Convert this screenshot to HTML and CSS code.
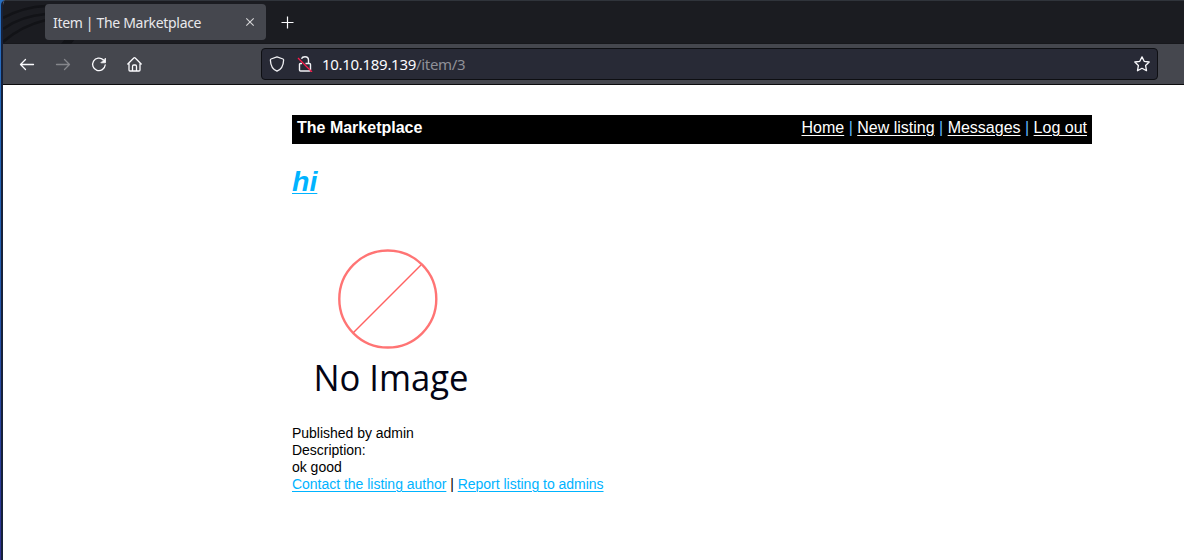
FILE: index.html
```html
<!DOCTYPE html>
<html lang="en">
<head>
<meta charset="utf-8">
<title>Item | The Marketplace</title>
<link rel="stylesheet" href="styles.css">
</head>
<body>
<div class="window">
  <div class="tabbar">
    <svg class="theme-art" width="90" height="44" viewBox="0 0 90 44" fill="none" stroke="#121317" stroke-width="2.5">
      <path d="M0 17Q20 6 43 5M0 28Q18 15 43 13M0 41Q18 25 43 19"/><path d="M58 43L62 38H72L68 43Z" fill="#121317" stroke="none"/>
    </svg>
    <div class="tab">
      <span class="tab-title">Item | The Marketplace</span>
      <svg class="tab-close" width="10" height="10" viewBox="0 0 10 10" fill="none" stroke="#d5d5d7" stroke-width="1.1"><path d="M1.300 1.300l7.400 7.400M8.700 1.300L1.300 8.700"/></svg>
    </div>
    <svg class="tab-new" width="13" height="13" viewBox="0 0 13 13" fill="none" stroke="#fbfbfe" stroke-width="1.2"><path d="M6.500 .5v12M.5 6.500h12"/></svg>
  </div>
  <div class="toolbar">
    <div class="nav-buttons">
      <svg width="16" height="16" viewBox="0 0 16 16" fill="none" stroke="#fbfbfe" stroke-width="1.3" stroke-linecap="round" stroke-linejoin="round"><path d="M14.500 8.500H1.500M6.500 3.500L1.500 8.500L6.500 13.500"/></svg>
      <svg width="16" height="16" viewBox="0 0 16 16" fill="none" stroke="#85868b" stroke-width="1.3" stroke-linecap="round" stroke-linejoin="round"><path d="M1.500 8.500h13M9.500 3.500L14.500 8.500L9.500 13.500"/></svg>
      <svg width="16" height="16" viewBox="0 0 16 16" fill="none" stroke="#fbfbfe" stroke-width="1.3" stroke-linecap="round"><path d="M12.300 3.800A6.300 6.300 0 1 0 14.200 9"/><path d="M14.500 2.500v4.300H10.200Z" fill="#fbfbfe" stroke-width=".8" stroke-linejoin="round"/></svg>
      <svg width="16" height="16" viewBox="0 0 16 16" fill="none" stroke="#fbfbfe" stroke-width="1.3" stroke-linecap="round" stroke-linejoin="round"><path d="M.8 8L6.800 2Q7.500 1.300 8.200 2L14.200 8M2 7.500V14Q2 15 3 15H12Q13 15 13 14V7.500M5.500 15V10.500Q5.500 9 6.700 9H8.300Q9.500 9 9.500 10.500V15"/></svg>
    </div>
    <div class="urlbar">
      <svg width="16" height="16" viewBox="0 0 16 16" fill="none" stroke="#f0f0f4" stroke-width="1.3" stroke-linejoin="round"><path d="M8 .9L14 3Q14.700 3.300 14.600 4.200C14.400 10 12 13.500 8 15.200C4 13.500 1.600 10 1.400 4.200Q1.300 3.300 2 3Z"/></svg>
      <svg class="lock" width="16" height="16" viewBox="0 0 16 16" fill="none" stroke="#f0f0f4" stroke-width="1.4"><path d="M4.500 2.800C5 1.400 6.300.8 8 .8C10.200.8 11.500 2.200 11.500 4.200V7.500M5 7.500H3.500Q2.500 7.500 2.500 8.500V14Q2.500 15 3.500 15H12.500Q13.500 15 13.500 14V8.500Q13.500 7.500 12.500 7.500H8.500"/><path d="M1 2L15 16" stroke="#ff1a4b" stroke-width="1.300"/></svg>
      <span class="url">10.10.189.139<span class="url-path">/item/3</span></span>
      <svg class="star" width="16" height="16" viewBox="0 0 16 16" fill="none" stroke="#fbfbfe" stroke-width="1.300" stroke-linejoin="round"><path d="M8 .9L10.200 5.300L15.200 6L11.600 9.500L12.500 14.700L8 12.300L3.500 14.700L4.400 9.500L.8 6L5.800 5.300Z"/></svg>
    </div>
  </div>
  <main class="page">
    <header class="site-header">
      <b>The Marketplace</b>
      <nav><a>Home</a> | <a>New listing</a> | <a>Messages</a> | <a>Log out</a></nav>
    </header>
    <h1 class="item-title"><a>hi</a></h1>
    <svg class="no-image" width="200" height="200" viewBox="0 0 200 200">
      <circle cx="95.800" cy="74" r="48.500" fill="none" stroke="#ff7474" stroke-width="2.400"/>
      <path d="M61.500 107.500L129 40" stroke="#ff6262" stroke-width="1.400"/>
      <text x="21.500" y="165.500" textLength="155" lengthAdjust="spacingAndGlyphs">No Image</text>
    </svg>
    <div class="details">
      <div>Published by admin</div>
      <div>Description:</div>
      <div>ok good</div>
      <div><a>Contact the listing author</a> | <a>Report listing to admins</a></div>
    </div>
  </main>
</div>
</body>
</html>
```
FILE: styles.css
```css
* { box-sizing: border-box; }
body { margin: 0; background: linear-gradient(#286fc0, #245fb2 45%, #2d2f91); }
.window { height: 560px; margin-left: 1px; border-left: 2px solid #16213a; border-radius: 5px 0 0 0; overflow: hidden; background: #fff; }
.tabbar { position: relative; display: flex; align-items: center; height: 44px; padding-left: 42px; background: #1b1c21; border-top: 1px solid #30343b; border-bottom: 1px solid #17181c; }
.theme-art { position: absolute; left: 0; top: 0; }
.tab { position: relative; display: flex; align-items: center; justify-content: space-between; width: 221px; height: 36px; padding: 0 11px 0 8px; border-radius: 4px; background: #45474e; }
.tab-title { padding-top: 2px; font: 14px/20px "Noto Sans", sans-serif; letter-spacing: -0.32px; color: #e9e9ec; }
.tab-new { margin-left: 15px; }
.toolbar { display: flex; align-items: center; height: 41px; padding: 0 26px 0 16px; background: #45474e; border-bottom: 1px solid #0c0c0d; }
.nav-buttons { display: flex; gap: 20px; width: 242px; }
.urlbar { display: flex; align-items: center; flex: 1; height: 32px; padding: 0 7px; border: 1px solid #0e0f13; border-radius: 4px; background: #282a36; }
.lock { margin-left: 12px; }
.url { margin-left: 9px; font: 15px/20px "Noto Sans", sans-serif; letter-spacing: -0.3px; color: #fbfbfe; }
.url-path { color: #8f9098; }
.star { margin-left: auto; }
.page { width: 800px; margin: 30px 0 0 289px; font: 14px/17px "Liberation Sans", Arial, sans-serif; color: #000; }
.page a { color: #00b3ff; text-decoration: underline; }
.site-header { display: flex; justify-content: space-between; height: 29px; padding: 4px 5px; background: #000; color: #fff; font-size: 16px; line-height: 18px; }
.site-header nav { color: #63b6ff; }
.site-header nav a { color: #fff; text-underline-offset: 2px; text-decoration-thickness: 1px; }
.item-title { margin: 20px 0 0; font-size: 28.5px; line-height: 34px; font-style: italic; }
.item-title a { text-decoration-thickness: 1px; text-underline-offset: 2px; text-decoration-skip-ink: none; }
.no-image { display: block; margin-top: 27px; }
.no-image text { font: 400 37px "Open Sans", "Noto Sans", sans-serif; fill: #030414; }
.details { color: #000; letter-spacing: -0.02px; }
.details a { text-underline-offset: 2px; text-decoration-thickness: 1px; }
```
